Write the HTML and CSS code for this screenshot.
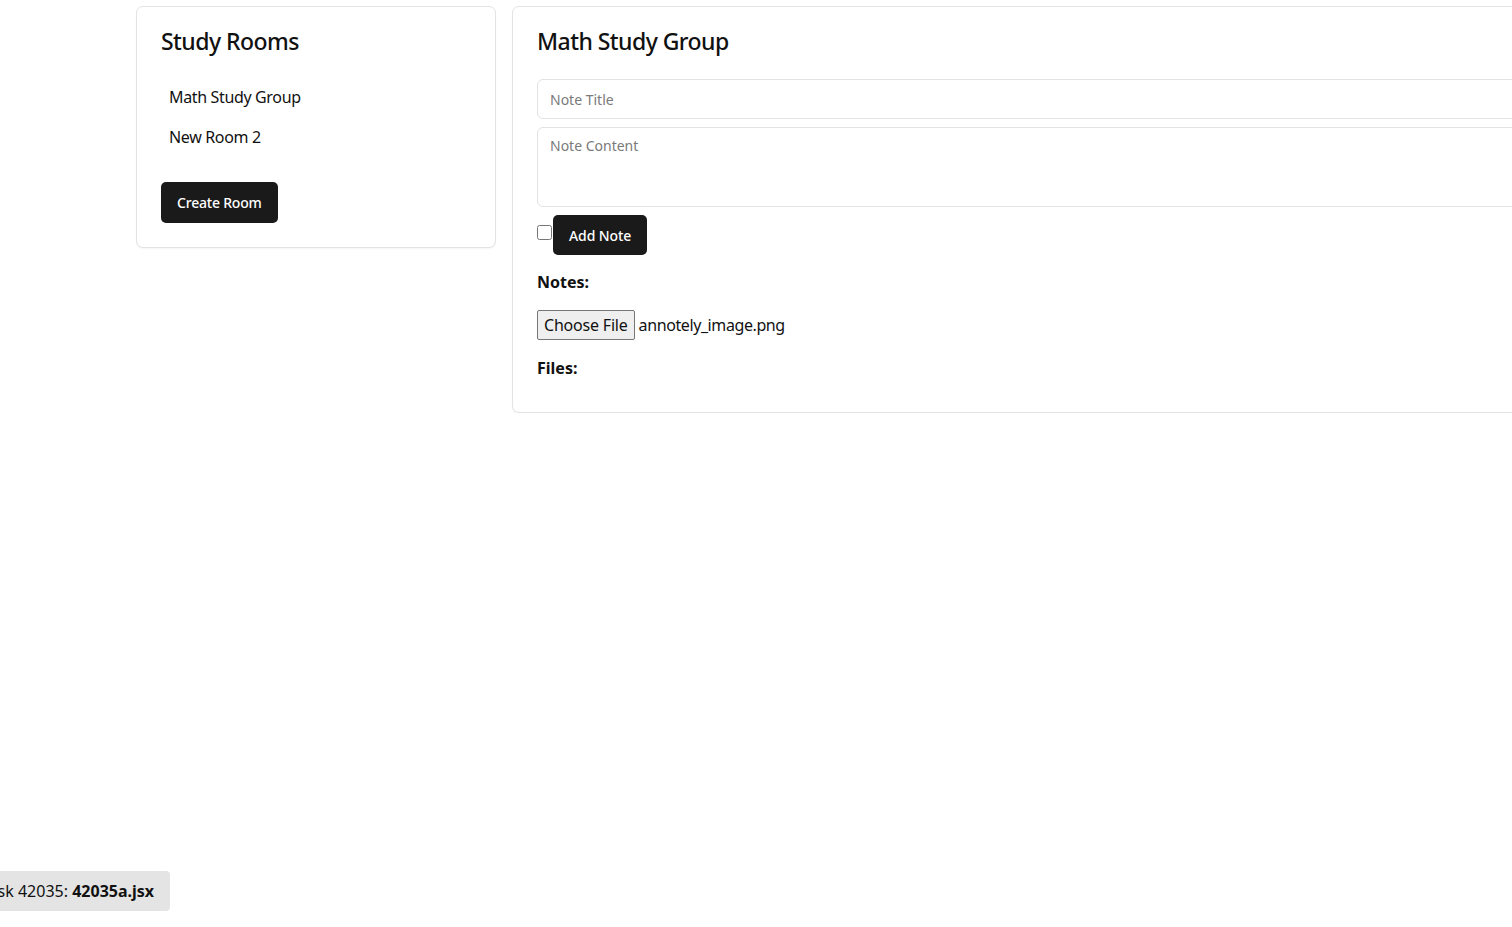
FILE: index.html
```html
<!DOCTYPE html>
<html lang="en">
<head>
<meta charset="utf-8">
<title>Study Rooms</title>
<link rel="stylesheet" href="styles.css">
</head>
<body>
<div class="app">
  <aside class="card rooms">
    <h2 class="card-title">Study Rooms</h2>
    <ul class="room-list">
      <li class="room-item">Math Study Group</li>
      <li class="room-item">New Room 2</li>
    </ul>
    <button class="btn btn-small">Create Room</button>
  </aside>
  <main class="card room">
    <h2 class="card-title">Math Study Group</h2>
    <input class="field" type="text" placeholder="Note Title">
    <textarea class="field area" placeholder="Note Content"></textarea>
    <div class="add-row">
      <input class="check" type="checkbox"><button class="btn">Add Note</button>
    </div>
    <h3 class="section">Notes:</h3>
    <div class="file-row">
      <button class="file-btn">Choose File</button><span class="file-name">annotely_image.png</span>
    </div>
    <h3 class="section files">Files:</h3>
  </main>
</div>
<div class="task-badge">Task 42035: <strong>42035a.jsx</strong></div>
</body>
</html>
```

FILE: styles.css
```css
html, body {
  margin: 0;
  padding: 0;
  background: #ffffff;
  overflow: hidden;
}
body {
  font-family: "Noto Sans", "Open Sans", sans-serif;
  color: #111111;
  font-size: 16px;
}
.app {
  display: flex;
  align-items: flex-start;
  gap: 16px;
  padding: 6px 0 0 136px;
}
.card {
  border: 1px solid #e3e3e3;
  border-radius: 7px;
  padding: 24px;
  background: #fff;
  box-shadow: 0 1px 2px rgba(0,0,0,0.04);
  flex: none;
}
.rooms {
  width: 360px;
  box-sizing: border-box;
}
.room {
  width: 1100px;
  box-sizing: border-box;
}
.card-title {
  margin: 0 0 26px;
  font-size: 23px;
  line-height: 20px;
  font-weight: 500;
  letter-spacing: -0.55px;
}
.room .card-title { margin-bottom: 28px; }
.room-list {
  list-style: none;
  margin: 0 0 25px;
  padding: 0;
}
.room-item {
  padding: 8px;
  line-height: 24px;
  font-size: 16px;
  letter-spacing: -0.35px;
}
.btn {
  display: inline-block;
  background: #1a1a1a;
  color: #fff;
  border: none;
  border-radius: 5px;
  height: 40px;
  padding: 0 16px;
  font-family: inherit;
  font-size: 14px;
  font-weight: 500;
  letter-spacing: -0.1px;
  cursor: pointer;
}
.btn-small {
  font-size: 14px;
  height: 41px;
  letter-spacing: -0.2px;
}
.field {
  display: block;
  width: 100%;
  box-sizing: border-box;
  height: 40px;
  border: 1px solid #e3e3e3;
  border-radius: 6px;
  padding: 0 12px;
  margin: 0 0 8px;
  font-family: inherit;
  font-size: 14px;
  color: #111;
  background: #fff;
}
.field::placeholder {
  color: #7a7a7a;
}
.area {
  height: 80px;
  padding: 8px 12px;
  resize: none;
  line-height: 20px;
}
.add-row {
  display: flex;
  align-items: center;
  height: 40px;
}
.check {
  width: 15px;
  height: 15px;
  margin: -5px 1px 0 0;
}
.section {
  margin: 15px 0 16px;
  font-size: 16px;
  line-height: 24px;
  font-weight: 700;
}
.files {
  margin: 16px 0 8px;
}
.file-row {
  display: flex;
  align-items: center;
  height: 30px;
}
.file-btn {
  height: 30px;
  box-sizing: border-box;
  padding: 0 6px;
  border: 1px solid #767676;
  border-radius: 2px;
  background: #efefef;
  color: #111;
  font-family: inherit;
  font-size: 16px;
  letter-spacing: -0.2px;
  margin-right: 4px;
}
.file-name {
  font-size: 16px;
  letter-spacing: -0.4px;
}
.task-badge {
  position: fixed;
  left: -35px;
  bottom: 16px;
  height: 40px;
  line-height: 40px;
  padding: 0 16px;
  background: #e4e4e4;
  border-radius: 4px;
  font-size: 16px;
  color: #111;
}
```
